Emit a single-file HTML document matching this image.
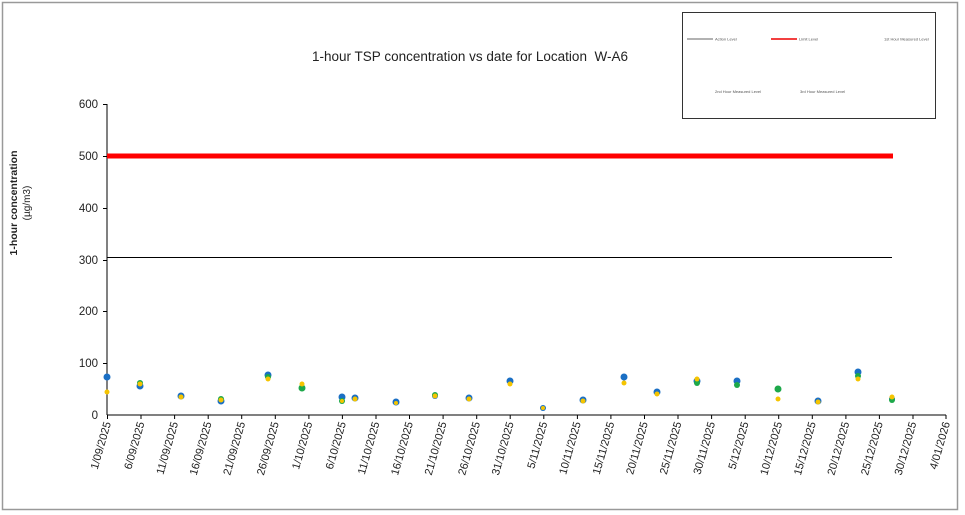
<!DOCTYPE html>
<html><head><meta charset="utf-8"><style>
html,body{margin:0;padding:0;background:#fff;width:965px;height:515px;overflow:hidden}
svg{display:block;font-family:"Liberation Sans",Arial,sans-serif}
</style></head><body>
<svg width="965" height="515" viewBox="0 0 965 515">
<rect x="2.5" y="2.5" width="955" height="507" fill="#fff" stroke="#999" stroke-width="1.5"/>
<rect x="682.5" y="12.5" width="253" height="106" fill="#fff" stroke="#333" stroke-width="1"/>
<line x1="687" y1="39" x2="713" y2="39" stroke="#999" stroke-width="1.5"/>
<text x="715" y="40.5" font-size="4" fill="#555">Action Level</text>
<line x1="771" y1="39" x2="797" y2="39" stroke="#e00" stroke-width="1.5"/>
<text x="799" y="40.5" font-size="4" fill="#555">Limit Level</text>
<text x="884" y="40.5" font-size="4" fill="#555">1st Hour Measured Level</text>
<text x="715" y="93" font-size="4" fill="#555">2nd Hour Measured Level</text>
<text x="800" y="93" font-size="4" fill="#555">3rd Hour Measured Level</text>
<text x="470" y="61" font-size="13.5" text-anchor="middle" fill="#222" xml:space="preserve" style="white-space:pre">1-hour TSP concentration vs date for Location  W-A6</text>
<text transform="translate(17,203) rotate(-90)" font-size="10.5" font-weight="bold" text-anchor="middle" fill="#222">1-hour concentration</text>
<text transform="translate(30,203) rotate(-90)" font-size="10" text-anchor="middle" fill="#222">(µg/m3)</text>
<g font-size="11.5" fill="#222" text-anchor="end">
<text x="98" y="108">600</text><text x="98" y="160">500</text><text x="98" y="212">400</text>
<text x="98" y="264">300</text><text x="98" y="315">200</text><text x="98" y="367">100</text><text x="98" y="419">0</text>
</g>
<g stroke="#000" stroke-width="1">
<line x1="107" y1="104" x2="107" y2="415"/>
<line x1="107" y1="415" x2="946" y2="415"/>
<line x1="103" y1="104.5" x2="107" y2="104.5"/><line x1="103" y1="156.5" x2="107" y2="156.5"/>
<line x1="103" y1="208.5" x2="107" y2="208.5"/><line x1="103" y1="260.5" x2="107" y2="260.5"/>
<line x1="103" y1="311.5" x2="107" y2="311.5"/><line x1="103" y1="363.5" x2="107" y2="363.5"/>
<line x1="107" y1="257.5" x2="892" y2="257.5"/>
</g>
<line x1="107" y1="156" x2="893" y2="156" stroke="#f00" stroke-width="5"/>
<g stroke="#000">
<line x1="107.5" y1="415" x2="107.5" y2="419"/><line x1="141" y1="415" x2="141" y2="419"/><line x1="174.6" y1="415" x2="174.6" y2="419"/><line x1="208.2" y1="415" x2="208.2" y2="419"/><line x1="241.7" y1="415" x2="241.7" y2="419"/><line x1="275.3" y1="415" x2="275.3" y2="419"/><line x1="308.9" y1="415" x2="308.9" y2="419"/><line x1="342.4" y1="415" x2="342.4" y2="419"/><line x1="376" y1="415" x2="376" y2="419"/><line x1="409.5" y1="415" x2="409.5" y2="419"/><line x1="443.1" y1="415" x2="443.1" y2="419"/><line x1="476.7" y1="415" x2="476.7" y2="419"/><line x1="510.2" y1="415" x2="510.2" y2="419"/><line x1="543.8" y1="415" x2="543.8" y2="419"/><line x1="577.4" y1="415" x2="577.4" y2="419"/><line x1="610.9" y1="415" x2="610.9" y2="419"/><line x1="644.5" y1="415" x2="644.5" y2="419"/><line x1="678" y1="415" x2="678" y2="419"/><line x1="711.6" y1="415" x2="711.6" y2="419"/><line x1="745.2" y1="415" x2="745.2" y2="419"/><line x1="778.7" y1="415" x2="778.7" y2="419"/><line x1="812.3" y1="415" x2="812.3" y2="419"/><line x1="845.9" y1="415" x2="845.9" y2="419"/><line x1="879.4" y1="415" x2="879.4" y2="419"/><line x1="913" y1="415" x2="913" y2="419"/><line x1="946" y1="415" x2="946" y2="419"/>
</g>
<g font-size="11" fill="#222" text-anchor="end">
<text transform="translate(111,423) rotate(-74)">1/09/2025</text>
<text transform="translate(144.6,423) rotate(-74)">6/09/2025</text>
<text transform="translate(178.2,423) rotate(-74)">11/09/2025</text>
<text transform="translate(211.7,423) rotate(-74)">16/09/2025</text>
<text transform="translate(245.3,423) rotate(-74)">21/09/2025</text>
<text transform="translate(278.9,423) rotate(-74)">26/09/2025</text>
<text transform="translate(312.4,423) rotate(-74)">1/10/2025</text>
<text transform="translate(346,423) rotate(-74)">6/10/2025</text>
<text transform="translate(379.6,423) rotate(-74)">11/10/2025</text>
<text transform="translate(413.1,423) rotate(-74)">16/10/2025</text>
<text transform="translate(446.7,423) rotate(-74)">21/10/2025</text>
<text transform="translate(480.2,423) rotate(-74)">26/10/2025</text>
<text transform="translate(513.8,423) rotate(-74)">31/10/2025</text>
<text transform="translate(547.4,423) rotate(-74)">5/11/2025</text>
<text transform="translate(580.9,423) rotate(-74)">10/11/2025</text>
<text transform="translate(614.5,423) rotate(-74)">15/11/2025</text>
<text transform="translate(648,423) rotate(-74)">20/11/2025</text>
<text transform="translate(681.6,423) rotate(-74)">25/11/2025</text>
<text transform="translate(715.2,423) rotate(-74)">30/11/2025</text>
<text transform="translate(748.7,423) rotate(-74)">5/12/2025</text>
<text transform="translate(782.3,423) rotate(-74)">10/12/2025</text>
<text transform="translate(815.9,423) rotate(-74)">15/12/2025</text>
<text transform="translate(849.4,423) rotate(-74)">20/12/2025</text>
<text transform="translate(883,423) rotate(-74)">25/12/2025</text>
<text transform="translate(916.5,423) rotate(-74)">30/12/2025</text>
<text transform="translate(950,423) rotate(-74)">4/01/2026</text>
</g>
<g fill="#1a6fc4">
<circle cx="107" cy="377" r="3.5"/><circle cx="140" cy="386" r="3.5"/><circle cx="181" cy="396" r="3.5"/><circle cx="221" cy="401" r="3.5"/><circle cx="268" cy="375" r="3.5"/><circle cx="342" cy="397" r="3.5"/><circle cx="355" cy="398" r="3.5"/><circle cx="396" cy="402" r="3.5"/><circle cx="435" cy="396" r="3"/><circle cx="469" cy="398" r="3.5"/><circle cx="510" cy="381" r="3.5"/><circle cx="543" cy="408" r="3"/><circle cx="583" cy="400" r="3.5"/><circle cx="624" cy="377" r="3.5"/><circle cx="657" cy="392" r="3.5"/><circle cx="697" cy="381" r="3.5"/><circle cx="737" cy="381" r="3.5"/><circle cx="818" cy="401" r="3.5"/><circle cx="858" cy="372" r="3.5"/><circle cx="892" cy="399" r="3"/>
</g>
<g fill="#1da84a">
<circle cx="140" cy="383" r="3"/><circle cx="221" cy="399" r="3"/><circle cx="268" cy="377" r="3"/><circle cx="302" cy="388" r="3.5"/><circle cx="342" cy="401" r="3"/><circle cx="435" cy="395" r="3"/><circle cx="737" cy="385" r="3"/><circle cx="778" cy="389" r="3.5"/><circle cx="858" cy="376" r="3"/><circle cx="892" cy="400" r="3"/><circle cx="697" cy="383" r="3"/>
</g>
<g fill="#f5c400">
<circle cx="107" cy="392" r="2.5"/><circle cx="140" cy="384" r="2.5"/><circle cx="181" cy="397" r="2.5"/><circle cx="221" cy="400" r="2.5"/><circle cx="268" cy="379" r="2.5"/><circle cx="302" cy="384" r="2.5"/><circle cx="342" cy="401" r="2"/><circle cx="355" cy="399" r="2.5"/><circle cx="396" cy="403" r="2"/><circle cx="435" cy="396" r="2.5"/><circle cx="469" cy="399" r="2.5"/><circle cx="510" cy="384" r="2.5"/><circle cx="543" cy="408" r="2"/><circle cx="583" cy="401" r="2.5"/><circle cx="624" cy="383" r="2.5"/><circle cx="657" cy="394" r="2.5"/><circle cx="697" cy="379" r="2.5"/><circle cx="778" cy="399" r="2.5"/><circle cx="818" cy="402" r="2.5"/><circle cx="858" cy="379" r="2.5"/><circle cx="892" cy="397" r="2.5"/>
</g>
</svg>
</body></html>
